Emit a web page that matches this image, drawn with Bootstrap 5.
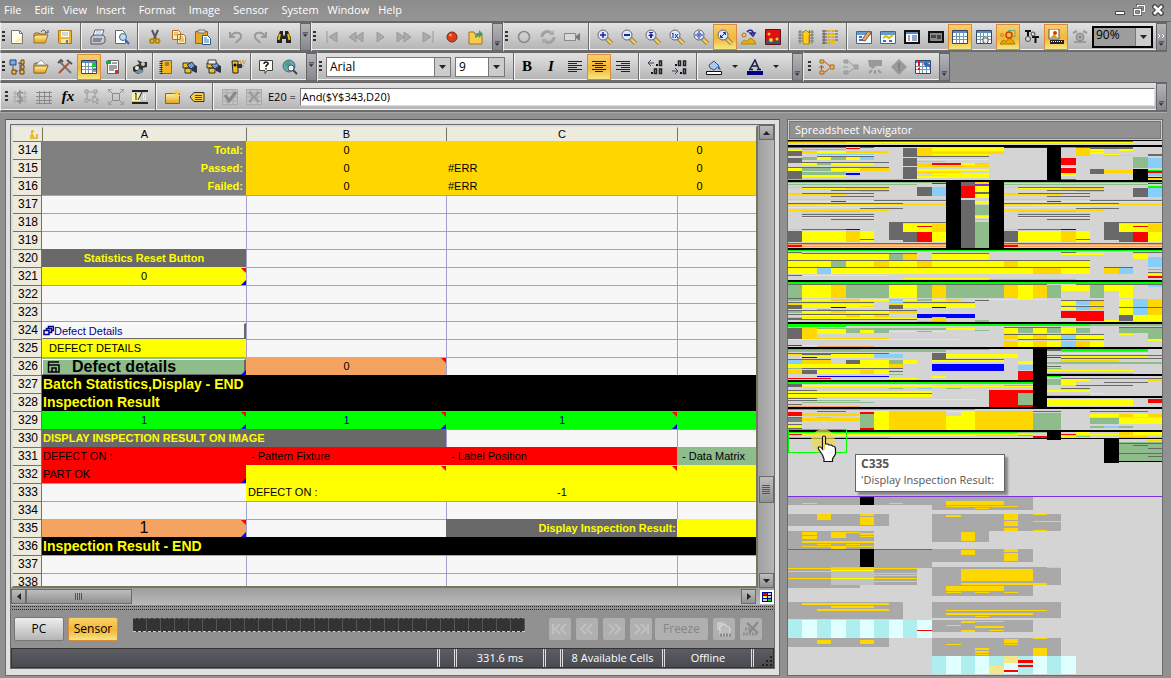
<!DOCTYPE html>
<html lang="en">
<head>
<meta charset="utf-8">
<meta name="viewport" content="width=device-width, initial-scale=1">
<title>Spreadsheet</title>
<link href="https://cdn.jsdelivr.net/npm/bootstrap@5.3.0/dist/css/bootstrap.min.css" rel="stylesheet">
<style>
body{font-family:"Open Sans",sans-serif;font-size:11px;line-height:14px;background:#919191;color:#000;height:100vh;overflow:hidden;padding-right:4px}
button,input,select{font-family:inherit;font-size:inherit;line-height:inherit}
svg{display:block;flex:none}
.menubar{height:22px;background:linear-gradient(#8b8b8b,#969696);border-bottom:1px solid #666;margin-right:-4px;padding-bottom:1px}
.menubar a{color:#fff;text-decoration:none;padding:0 5px 0 4px}
.winbtn{border:0;background:none;padding:0;width:19px;height:20px;display:grid;place-items:center}
.band{height:30px}
.tools{height:30px;display:flex;align-items:center;background:linear-gradient(#e2e2e2,#b4b4b4);border-top:1px solid #666;border-bottom:2px solid #6c6c6c;border-left:1px solid #eee;box-shadow:inset 0 -1px #f2f2f2}
.grip{width:3px;height:11px;margin:0 1px 0 1px;background:repeating-linear-gradient(#333 0 2px,transparent 2px 4px);flex:none}
.tbtn{width:24px;height:26px;padding:0;border:1px solid transparent;background:none;display:grid;place-items:center;flex:none}
.tbtn.on{border-color:#d98a3a;background:linear-gradient(#f8cf6c,#f1b637 55%,#f7e682)}
.rule{width:2px;height:27px;background:#6b6b6b;border-right:1px solid #f4f4f4;flex:none}
.mx-a{margin-left:3px;margin-right:4px}
.more{width:11px;height:28px;border:1px solid #666;background:linear-gradient(#b4b4b8,#85868e);padding:0 0 3px;display:flex;flex-direction:column;justify-content:end;align-items:center;flex:none}
.more.mid{justify-content:center}
.pick{appearance:none;height:20px;border:1px solid #777;border-radius:0;padding:0 3px;font-size:12px;color:#000;background:url("data:image/svg+xml,%3Csvg xmlns='http://www.w3.org/2000/svg' width='16' height='18'%3E%3Cpath fill='%23ccc' d='M1 0h15v18H1z'/%3E%3Cpath fill='%23777' d='M0 0h1v18H0z'/%3E%3Cpath fill='%23223' d='M5 7h7l-3.500 4z'/%3E%3C/svg%3E") right center no-repeat #fff}
.zoompick{width:61px;height:22px;border:2px solid #000;background-color:#9d9d9d;padding:0 2px 5px;margin:0}
.cellref{width:34px;padding-left:2px;white-space:nowrap}
.formula{height:18px;border:1px solid #777;border-right-color:#ddd;border-bottom-color:#ddd;padding:0 1px;background:#fff;border-radius:0}
.work{padding:6px 0 2px 5px;gap:7px;min-height:0;border-top:1px solid #aaa}
.pane{border:1px solid #6b6b6b;border-top-color:#555;background:#e0e0e0;padding:4px 4px 6px;min-width:0}
.inner{border:1px solid #6b6b6b;background:#919191;min-height:0}
.sheetrow{min-height:0}
.clip{overflow:hidden;border:2px solid #76765f;border-top-color:#ddd;border-left-color:#ddd;background:#f7f7f7;min-width:0}
.sheet{width:100%;table-layout:fixed;border-collapse:separate;border-spacing:0;font-family:"Liberation Sans",sans-serif;font-size:11px;line-height:16px}
.sheet th,.sheet td{padding:0 1px 1px;height:18px;border-top:1px solid #a0a0c8;border-left:1px solid #a0a0c8;white-space:nowrap;overflow:visible;position:relative;text-align:center}
.sheet thead th{height:14px;line-height:13px;padding:0;background:#edeade;border-color:#edeade #edeade #edeade #76765f;font-weight:400}
.sheet thead th:first-child{border-left-color:#edeade}
.sheet tbody th{background:#edeade;border-color:#76765f;border-left:0;border-right:1px solid #76765f;font-weight:400;text-align:right;font-size:12px;padding-right:3px}
.sheet td:nth-child(2){border-left:0;padding-left:1px}
.sheet td.l{text-align:left}.sheet td.r{text-align:right;padding-right:3px}.sheet td.far{padding-right:36px}
.sheet .sun{background:#ffd700;border-color:#ffd700}
.sheet .ash{background:#808080;border-color:#808080}
.sheet .dim{background:#696969;border-color:#696969}
.sheet .yel{background:#ff0;border-color:#ff0}
.sheet .sandy{background:#f4a460;border-color:#f4a460}
.sheet .blk{background:#000;border-color:#000}
.sheet .lime{background:#0f0;border-color:#0f0;color:#00008b}
.sheet .red{background:#f00;border-color:#f00}
.sheet .sage{background:#8fbc8b;border-color:#8fbc8b}
.sheet .b{font-weight:700;color:#ff0}
.sheet .big{font-weight:700;color:#ff0;font-size:14px;text-align:left}
.hi::before,.lo::after{content:"";position:absolute;right:0;width:5px;height:5px}
.hi::before{top:0;background:#f00;clip-path:polygon(0 0,100% 0,100% 100%)}
.lo::after{bottom:0;background:#00f;clip-path:polygon(100% 0,100% 100%,0 100%)}
.cellbtn{display:flex;align-items:center;width:100%;height:16px;border:1px solid #fff;border-right:2px solid #696969;border-bottom:1px solid #696969;background:none;padding:0;line-height:14px;text-align:left}
.sbar{background:linear-gradient(90deg,#a0a0a0,#b5b5b5)}
.sbtn{width:15px;height:15px;padding:0;border:1px solid #6a6a6a;background:linear-gradient(#bdbdbd,#929292);display:grid;place-items:center;flex:none}
.vs{width:16px}.hs{height:17px;background:linear-gradient(#9d9d9d,#b9b9b9)}
.split{height:5px;margin:0 1px;background:repeating-linear-gradient(90deg,#222 0 1px,transparent 1px 2px) 0 1px/100% 1px no-repeat,repeating-linear-gradient(90deg,#222 0 1px,transparent 1px 2px) 0 4px/100% 1px no-repeat}
.mode{width:50px;height:24px;border:1px solid #777;border-radius:2px;background:linear-gradient(#eee,#b5b5b5);padding:0;font-size:12px}
.mode.on{border-color:#d98a3a;background:linear-gradient(#f8d366,#f1b637 55%,#f7e682)}
.film{height:14px;max-width:392px;background:repeating-linear-gradient(90deg,#333 0 13px,#555 13px 14px);border-top:1px dashed #666;border-bottom:1px dashed #ccc}
.ghost{width:22px;height:22px;border:0;border-radius:2px;background:#b0b0b0;color:#858585;padding:0;display:grid;place-items:center;flex:none}
.status{height:20px;background:linear-gradient(#5c5d62,#4a4b50);border:1px solid #333;color:#fff}
.status div{border-left:3px double #ddd;height:18px;line-height:18px;text-align:center;white-space:nowrap}
.navpane{width:376px;flex:none;border:1px solid #6b6b6b;background:#d4d4d4;min-height:0}
.navtitle{height:20px;flex:none;border:1px solid #ccc;outline:1px solid #777;outline-offset:-2px;background:#919191;color:#fff;padding:1px 6px}
.navtitle h2{font-size:11px;line-height:15px;margin:0;font-weight:400}
.tip{position:absolute;left:67px;top:314px;width:150px;background:#fff;border:1px solid #666;box-shadow:3px 3px 2px #888;color:#555;padding:1px 0 3px 5px;line-height:16px;white-space:nowrap}
.tip b{font-size:12px}
.hand{position:absolute;left:23px;top:287px}
</style>
</head>
<body class="d-flex flex-column">
<svg width="0" height="0" class="position-absolute" aria-hidden="true">
<defs>
<linearGradient id="gold" x2="0" y2="1"><stop stop-color="#fff3a0"/><stop offset="1" stop-color="#e0a020"/></linearGradient>
<symbol id="lens" viewBox="0 0 16 16"><path d="M9.500 9.500l5 5" stroke="#765" stroke-width="4"/><path d="M10 10l4.500 4.500" stroke="#fc4" stroke-width="2.500"/><circle cx="6" cy="6" r="5" fill="#dceaff" stroke="#667"/></symbol>
<symbol id="folder" viewBox="0 0 16 16"><path d="M1 5l1-1h4l1 1h5v3H1z" fill="#e8b030" stroke="#865"/><path d="M1 14V7l3-1h11l-3 8z" fill="url(#gold)" stroke="#a07020"/></symbol>
<symbol id="sheetgrid" viewBox="0 0 16 16"><path d="M.5 1.500h15v13H.5z" fill="#fff" stroke="#346"/><path d="M1 2h14v2H1z" fill="#58b"/><path d="M1 7.500h14M1 10.500h14M4.500 3v11M7.500 3v11M11.500 3v11" stroke="#79a"/></symbol>
<symbol id="win" viewBox="0 0 16 16"><path d="M.5 2.500h15v12H.5z" fill="#f4f8fc" stroke="#468"/><path d="M1 3h14v3H1z" fill="#69c"/></symbol>
<symbol id="down" viewBox="0 0 8 6"><path d="M1 .5h6" stroke="#333"/><path d="M1 2h6L4 5.500z" fill="#333"/><path d="M4 5.500L7 2" stroke="#fff" stroke-width=".5"/></symbol>
<symbol id="hills" viewBox="0 0 16 16"><path d="M0 14c2-5 4-6 6-2 2-6 6-6 10 2z" fill="#e8a800" stroke="#864"/><circle cx="3" cy="5" r="2" fill="#fb2" stroke="#a63"/></symbol>
<symbol id="can" viewBox="0 0 16 16"><path d="M1 4h8v5H1zM3 9h6v5H3z" fill="#f1c021" stroke="#333"/><path d="M8 4l7 3v7l-5-2z" fill="#334"/><path d="M5 6l5-3 3 4-4 3z" fill="#79c" stroke="#235"/></symbol>
</defs></svg>

<nav class="menubar d-flex align-items-center flex-shrink-0" aria-label="Menu">
<a href="#">File</a><a href="#" class="ms-1 ps-1">Edit</a><a href="#">View</a><a href="#">Insert</a><a href="#" class="ms-1">Format</a><a href="#" class="ms-1">Image</a><a href="#" class="ms-1">Sensor</a><a href="#" class="ms-1">System</a><a href="#">Window</a><a href="#">Help</a>
<div class="ms-auto d-flex pe-1">
<button class="winbtn" aria-label="Minimize"><svg width="12" height="12"><path d="M1.500 7.500h9v3h-9z" fill="#fff" stroke="#444"/></svg></button>
<button class="winbtn" aria-label="Restore"><svg width="12" height="12"><path d="M4.500 3V1.500h7v6H9M1.500 5.500h6v5h-6z" fill="none" stroke="#444" stroke-width="3"/><path d="M4.500 3V1.500h7v6H9M1.500 5.500h6v5h-6z" fill="none" stroke="#fff" stroke-width="1.500"/></svg></button>
<button class="winbtn" aria-label="Close"><svg width="12" height="12"><path d="M1 1l10 10M11 1L1 11" stroke="#444" stroke-width="5"/><path d="M2 2l8 8M10 2l-8 8" stroke="#fff" stroke-width="2.500"/></svg></button>
</div>
</nav>

<div class="band d-flex flex-shrink-0">
<div class="tools">
<span class="grip me-0"></span>
<button class="tbtn" aria-label="New"><svg width="16" height="16"><path d="M2.500 1.500h8l3 3v10h-11z" fill="#fffff0" stroke="#777"/><path d="M4 13h9V8z" fill="#fdeea0"/><path d="M10.500 1.500v3h3" fill="none" stroke="#777"/></svg></button>
<button class="tbtn" aria-label="Open"><svg width="16" height="16"><use href="#folder"/><path d="M8 3c2-3 4-2 5 0l-1 1 3 0v-3" fill="none" stroke="#357"/></svg></button>
<button class="tbtn" aria-label="Save"><svg width="16" height="16"><path d="M1.500 1.500h13v13h-12l-1-1z" fill="#eeb62c" stroke="#a87820"/><path d="M4 2h8v6H4z" fill="#fff"/><path d="M5 4h6M5 6h6" stroke="#aaa"/><path d="M4 10h8v4H4z" fill="#f4e2a0"/><path d="M9 11h2v3H9z" fill="#777"/></svg></button>
<span class="rule mx-a"></span>
<button class="tbtn" aria-label="Print"><svg width="16" height="16"><path d="M5 1h9l-2 6H3z" fill="#fff" stroke="#568"/><path d="M1 8l3-2h9l2 2v5l-3 2H1z" fill="#c5c8cf" stroke="#556"/><path d="M3 10h9M3 12h8" stroke="#445"/><path d="M6 3h5M6 5h5" stroke="#9bd"/></svg></button>
<button class="tbtn" aria-label="Print preview"><svg width="16" height="16"><path d="M1.500 1.500h7l3 3v10h-10z" fill="#fff" stroke="#666"/><circle cx="9" cy="8" r="3.500" fill="#bde" stroke="#468"/><path d="M11.500 11l3.500 4" stroke="#36a" stroke-width="2"/></svg></button>
<span class="rule mx-a"></span>
<button class="tbtn" aria-label="Cut"><svg width="16" height="16"><path d="M5 1l4 9M11 1L7 10" stroke="#556" stroke-width="2"/><circle cx="5" cy="12" r="2" fill="none" stroke="#b80" stroke-width="2"/><circle cx="10.500" cy="12" r="2" fill="none" stroke="#b80" stroke-width="2"/></svg></button>
<button class="tbtn" aria-label="Copy"><svg width="16" height="16"><path d="M1.500 1.500h6l2 2v7h-8zM6.500 5.500h6l2 2v7h-8z" fill="#fff0b8" stroke="#b56a20"/><path d="M3 4h4M3 6h3M8 8h4M8 10h5M8 12h5" stroke="#c93"/></svg></button>
<button class="tbtn" aria-label="Paste"><svg width="16" height="16"><path d="M.5 2.500h12v12H.5z" fill="#e6a924" stroke="#955"/><path d="M3 1h7v3H3z" fill="#ddd" stroke="#777"/><path d="M7.500 6.500h5l3 3v6h-8z" fill="#fff" stroke="#357"/><path d="M9 9h3M9 11h5M9 13h5" stroke="#37b"/></svg></button>
<span class="rule mx-a"></span>
<button class="tbtn" aria-label="Undo"><svg width="16" height="16"><path d="M2 3v5h5M3 7c3-5 11-4 10 1-.5 3-4 3-5 6" fill="none" stroke="#999" stroke-width="2"/></svg></button>
<button class="tbtn" aria-label="Redo"><svg width="16" height="16"><path d="M14 3v5H9M13 7C10 2 2 3 3 8c.5 3 4 3 5 6" fill="none" stroke="#999" stroke-width="2"/></svg></button>
<button class="tbtn" aria-label="Find"><svg width="16" height="16"><path d="M4 2h3v4l1 1 1-1V2h3l3 7v5h-5v-4H6v4H1V9z" fill="#222"/><path d="M4 5L2.500 11M12 5l1.500 6" stroke="#eb0" stroke-width="2"/></svg></button>
<button class="more mid ms-1" aria-label="Toolbar options"><svg width="7" height="6"><use href="#down"/></svg></button>
</div>
<div class="tools">
<span class="grip me-1"></span>
<button class="tbtn" aria-label="First"><svg width="16" height="16"><path d="M3 2v12M13 3v10L5 8z" fill="#aaa" stroke="#999"/></svg></button>
<button class="tbtn" aria-label="Back"><svg width="16" height="16"><path d="M8 3v10L1 8zM15 3v10L8 8z" fill="#aaa" stroke="#999"/></svg></button>
<button class="tbtn" aria-label="Play"><svg width="16" height="16"><path d="M5 3v10l7-5z" fill="#aaa" stroke="#999"/></svg></button>
<button class="tbtn" aria-label="Forward"><svg width="16" height="16"><path d="M1 3v10l7-5zM8 3v10l7-5z" fill="#aaa" stroke="#999"/></svg></button>
<button class="tbtn" aria-label="Last"><svg width="16" height="16"><path d="M3 3v10l8-5zM13 2v12" fill="#aaa" stroke="#999"/></svg></button>
<button class="tbtn" aria-label="Record"><svg width="16" height="16"><circle cx="8" cy="8" r="5" fill="#d8401a" stroke="#822"/><circle cx="6.500" cy="6" r="1.500" fill="#ff9060"/></svg></button>
<button class="tbtn" aria-label="Open recording"><svg width="16" height="16"><path d="M1 3h5l1 2h7v10H1z" fill="#f5cd4c" stroke="#b06a20"/><path d="M7 9c0-4 2-5 4-5V1l4 4-4 4V7" fill="#4a9a70"/></svg></button>
<button class="more ms-1" aria-label="Toolbar options"><svg width="7" height="6"><use href="#down"/></svg></button>
</div>
<div class="tools flex-grow-1">
<span class="grip me-1"></span>
<button class="tbtn" aria-label="Trigger"><svg width="16" height="16"><circle cx="8" cy="8" r="5.500" fill="none" stroke="#888" stroke-width="1.500"/></svg></button>
<button class="tbtn" aria-label="Repeat"><svg width="16" height="16"><path d="M2 8c0-5 6-7 9-4M14 8c0 5-6 7-9 4" fill="none" stroke="#a2a2a2" stroke-width="3"/><path d="M9 6h5V1M7 10H2v5" fill="#aaa"/></svg></button>
<button class="tbtn" aria-label="Live video"><svg width="16" height="16"><path d="M.5 4.500h11v7H.5z" fill="#d8d8d8" stroke="#888"/><path d="M12 7l4-3v8l-4-3z" fill="#777"/></svg></button>
<span class="rule ms-1 me-1"></span>
<button class="tbtn" style="margin-left:-1px" aria-label="Zoom in"><svg width="16" height="16"><use href="#lens"/><path d="M3 6h6M6 3v6" stroke="#229" stroke-width="1.500"/></svg></button>
<button class="tbtn" aria-label="Zoom out"><svg width="16" height="16"><use href="#lens"/><path d="M3 6h6" stroke="#229" stroke-width="2"/></svg></button>
<button class="tbtn" aria-label="Zoom to point"><svg width="16" height="16"><use href="#lens"/><path d="M4 3.500h4" stroke="#229"/><path d="M6 4l3 3H7v2H5V7H3z" fill="#229"/></svg></button>
<button class="tbtn" aria-label="Actual size"><svg width="16" height="16"><use href="#lens"/><path d="M3 5l1-1v5M6 5l3 4M9 5L6 9" fill="none" stroke="#229"/></svg></button>
<button class="tbtn" aria-label="Fit"><svg width="16" height="16"><use href="#lens"/><path d="M2 6h8M6 2v8" stroke="#229" stroke-dasharray="3 2"/><path d="M4 4l4 4M8 4L4 8" stroke="#57c"/></svg></button>
<button class="tbtn on" aria-label="Fill"><svg width="16" height="16"><use href="#lens"/><path d="M4 8l4-4M6 3.500h2.500V6M3.500 6v2.500H6" fill="none" stroke="#229"/></svg></button>
<button class="tbtn" aria-label="Rotate image"><svg width="16" height="16"><path d="M0 15c2-4 4-5 6-2 2-5 6-5 9 2z" fill="#e8b000" stroke="#a80"/><circle cx="3" cy="6" r="2" fill="#fc4" stroke="#a63"/><path d="M6 3c2-3 6-2 6 1M9 4h5l-2 3z" fill="none" stroke="#229" stroke-width="1.500"/></svg></button>
<button class="tbtn" aria-label="Image overlay"><svg width="16" height="16"><path d="M.5.5h15v15H.5z" fill="#d11" stroke="#611"/><path d="M1 15V12l4-2 4 3 3-3 3 2v3z" fill="#357"/><circle cx="4" cy="5" r="1.500" fill="#fb3"/><circle cx="6" cy="11" r="2" fill="#fc2"/><circle cx="12" cy="10" r="1.500" fill="#fc2"/></svg></button>
<span class="rule mx-a"></span>
<button class="tbtn" aria-label="Promote"><svg width="16" height="16"><path d="M0 3h16M0 6h16M0 9h16M0 12h16M2 1v14M14 1v14M11.500 1v14" stroke="#777"/><path d="M8 1l5 5h-2v9H5V6H3z" fill="#fc2" stroke="#b80"/></svg></button>
<button class="tbtn" aria-label="Columns"><svg width="16" height="16"><path d="M0 2h5M0 5h5M0 8h5M0 11h5M0 14h5M13 2h3M13 5h3M13 8h3M13 11h3M2 1v14" stroke="#555"/><path d="M7 1v14M11 1v12" stroke="#e8b000" stroke-width="3" stroke-dasharray="2 1"/><path d="M8 12h6l-3 4z" fill="#fb0"/></svg></button>
<span class="rule ms-1 me-1"></span>
<button class="tbtn" aria-label="Edit form"><svg width="16" height="16"><use href="#win"/><path d="M3 8h3M3 11h4" stroke="#37b" stroke-width="2"/><path d="M6 11l6-9 3 2-6 8z" fill="#e8a860" stroke="#854"/></svg></button>
<button class="tbtn" aria-label="Chart form"><svg width="16" height="16"><use href="#win"/><path d="M3 9l3-2 3 2 4-3" fill="none" stroke="#db0" stroke-width="2"/><path d="M3 12h3M9 12h3" stroke="#37b" stroke-width="2"/></svg></button>
<button class="tbtn" aria-label="Dialog"><svg width="16" height="16"><path d="M0 1h16v14H0z" fill="#111"/><path d="M2 3h12v10H2z" fill="#fff"/><path d="M2 4h12" stroke="#58b" stroke-width="2"/><path d="M4 7h2M8 7h5M4 9h2M8 9h5M4 11h2M8 11h5" stroke="#258"/></svg></button>
<button class="tbtn" aria-label="Display"><svg width="16" height="16"><path d="M0 2h16v12H0z" fill="#111"/><path d="M2 4h12v8H2z" fill="#888"/><path d="M3 6h5v3H3zM9 6h4v4H9z" fill="#444"/></svg></button>
<button class="tbtn on" aria-label="Grid"><svg width="16" height="16"><use href="#sheetgrid"/></svg></button>
<button class="tbtn" aria-label="Grid options"><svg width="16" height="16"><use href="#sheetgrid"/><path d="M7 9h5v4l-2 2-3-2z" fill="#eee" stroke="#555"/></svg></button>
<button class="tbtn on" aria-label="Graphics"><svg width="16" height="16"><path d="M0 15c2-4 4-5 6-2 2-5 6-5 9 2z" fill="#e8a800" stroke="#a70"/><circle cx="2" cy="6" r="1.500" fill="#fb2" stroke="#c83"/><path d="M8 1.500h7v6h-2" fill="none" stroke="#6a8"/><circle cx="9" cy="6" r="3" fill="none" stroke="#c40" stroke-width="1.500"/></svg></button>
<button class="tbtn" aria-label="Text overlay"><svg width="16" height="16"><path d="M1 2h6M4 2v5M8 8h7M11.500 8v6" stroke="#111" stroke-width="2"/><circle cx="4" cy="10" r="2.500" fill="#ddd" stroke="#444"/><circle cx="9" cy="5" r="2" fill="#ddd" stroke="#444"/></svg></button>
<button class="tbtn on" aria-label="Filmstrip"><svg width="16" height="16"><path d="M1 0h10v10H1z" fill="#fff" stroke="#555"/><circle cx="7" cy="4" r="2" fill="#c40"/><path d="M2 9l4-4 4 4z" fill="#e90"/><path d="M2 11h14v4H2z" fill="#222"/><path d="M3 12.500h12" stroke="#fff" stroke-dasharray="1 1"/></svg></button>
<button class="tbtn" aria-label="Alarm"><svg width="16" height="16"><path d="M1 4l4-2M15 4l-4-2M2 13h12" stroke="#999" stroke-width="2"/><circle cx="8" cy="8" r="4" fill="#aaa" stroke="#888"/><circle cx="8" cy="8" r="1" fill="#777"/></svg></button>
<select class="pick zoompick" aria-label="Zoom"><option>90%</option></select>
<button class="more ms-auto justify-content-between pt-2" aria-label="Toolbar options"><svg width="7" height="7"><path d="M0 2l2 2-2 2M4 2l2 2-2 2" fill="none" stroke="#fff"/></svg><svg width="7" height="6"><use href="#down"/></svg></button>
</div>
</div>

<div class="band d-flex flex-shrink-0">
<div class="tools">
<span class="grip me-0"></span>
<button class="tbtn" aria-label="Network"><svg width="16" height="16"><path d="M4 7v5h5M9 4h4M11 4v9" fill="none" stroke="#555"/><path d="M1 1h6v5H1z" fill="#7ae" stroke="#346"/><path d="M12 1h3v4h-3zM12 6h3v4h-3zM3 11h4v4H3zM11 11h4v4h-4z" fill="#fb2" stroke="#543"/></svg></button>
<button class="tbtn" aria-label="Jobs"><svg width="16" height="16"><use href="#folder"/><path d="M3 6l5-5 5 5z" fill="#fff" stroke="#999"/><path d="M1 14V7h14l-3 7z" fill="url(#gold)" stroke="#a07020"/></svg></button>
<button class="tbtn" aria-label="Tools"><svg width="16" height="16"><path d="M3 3l11 11" stroke="#777" stroke-width="2"/><path d="M12 4L2 14" stroke="#a54" stroke-width="2"/><path d="M1 4l3-3 2 2M10 1l5 4" fill="none" stroke="#555" stroke-width="2"/></svg></button>
<button class="tbtn on" aria-label="Spreadsheet"><svg width="16" height="16"><use href="#sheetgrid"/><path d="M11 4h4v4h-4z" fill="#1c3"/><path d="M12 10h3M12 12h3" stroke="#238" stroke-width="1"/></svg></button>
<button class="tbtn" aria-label="Report"><svg width="16" height="16"><path d="M2.500 1.500h11v13h-11z" fill="#fff" stroke="#666"/><path d="M1 2h5v3H1z" fill="#1a4"/><path d="M7 4h5M4 7h8M4 9h8M4 11h5" stroke="#444"/><path d="M10 11h3v3h-3z" fill="#d22"/></svg></button>
<span class="rule me-1"></span>
<button class="tbtn" style="margin-left:-3px" aria-label="Users"><svg width="16" height="16"><path d="M5 1l5 2 5 0v5l-5 1zM1 8l6-3 4 3v5l-5 2-5-3z" fill="#333"/><circle cx="11" cy="5" r="2" fill="#ccb"/><circle cx="5" cy="9" r="2" fill="#eec"/><path d="M3 13l5-3 4 2-4 3z" fill="#69a"/></svg></button>
<span class="rule me-0"></span>
<button class="tbtn" aria-label="Notebook"><svg width="16" height="16"><path d="M3.500 1.500h10v13h-10z" fill="#f3b51f" stroke="#765"/><path d="M3 2v13" stroke="#333" stroke-width="3" stroke-dasharray="1 1"/><path d="M7 4h4M7 6h4" stroke="#543"/></svg></button>
<button class="tbtn" aria-label="Backup"><svg width="16" height="16"><use href="#can"/></svg></button>
<button class="tbtn" aria-label="Restore"><svg width="16" height="16"><use href="#can"/><path d="M2 1h8v4H2z" fill="#eee" stroke="#444"/></svg></button>
<button class="tbtn" aria-label="Clone"><svg width="16" height="16"><path d="M2 2h6v12H3z" fill="#f1b81c" stroke="#222"/><path d="M7 5h5v4H7z" fill="#333"/><path d="M9 2h7M10 4h6M12 7h3" stroke="#c94" stroke-width="1.500" stroke-dasharray="2 1"/><circle cx="5" cy="6" r="1.500"/></svg></button>
<span class="rule me-1"></span>
<button class="tbtn" style="margin-left:-2px" aria-label="Help"><svg width="16" height="16"><path d="M1.500 1.500h13v10H9l-2 3v-3H1.500z" fill="#fffff4" stroke="#444"/><path d="M6 5c0-3 5-2 4 0L8 7v1M8 9v1.500" fill="none" stroke="#111" stroke-width="1.500"/></svg></button>
<button class="tbtn me-1" aria-label="Web"><svg width="16" height="16"><circle cx="7" cy="7" r="6" fill="#6ab" stroke="#468"/><path d="M3 3l4-1 2 3-3 3-3-1zM8 10l4-3 0 3-3 3z" fill="#4a6"/><circle cx="9" cy="9" r="3" fill="#eef" stroke="#456"/><path d="M11 11l4 4" stroke="#444" stroke-width="2"/></svg></button>
<button class="more mid ms-auto" aria-label="Toolbar options"><svg width="7" height="6"><use href="#down"/></svg></button>
</div>
<div class="tools">
<span class="grip me-1"></span>
<select class="pick" style="width:125px" aria-label="Font"><option>Arial</option></select>
<select class="pick ms-1" style="width:50px" aria-label="Font size"><option>9</option></select>
<span class="rule ms-2 me-0"></span>
<button class="tbtn" aria-label="Bold"><b style="font:bold 15px 'Liberation Serif',serif">B</b></button>
<button class="tbtn" aria-label="Italic"><b style="font:italic bold 15px 'Liberation Serif',serif">I</b></button>
<button class="tbtn" aria-label="Align left"><svg width="16" height="16"><path d="M1 2.500h14M1 4.500h9M1 6.500h14M1 8.500h9M1 10.500h14M1 12.500h9" stroke="#222"/></svg></button>
<button class="tbtn on" aria-label="Center"><svg width="16" height="16"><path d="M1 2.500h14M4 4.500h8M1 6.500h14M4 8.500h8M1 10.500h14M4 12.500h8" stroke="#222"/></svg></button>
<button class="tbtn" aria-label="Align right"><svg width="16" height="16"><path d="M1 2.500h14M6 4.500h9M1 6.500h14M6 8.500h9M1 10.500h14M6 12.500h9" stroke="#222"/></svg></button>
<span class="rule mx-a"></span>
<button class="tbtn" aria-label="Increase decimal"><svg width="16" height="16"><path d="M0 4h6M3 1L0 4l3 3" fill="none" stroke="#346"/><path d="M8 6h2M3 14h2" stroke="#111" stroke-width="2"/><path d="M11.500 2v4.500h2V2zM6.500 10v4.500h2V10zM11.500 10v4.500h2V10z" fill="none" stroke="#222" stroke-width="1.500"/></svg></button>
<button class="tbtn" aria-label="Decrease decimal"><svg width="16" height="16"><path d="M0 12h6M3 9l3 3-3 3" fill="none" stroke="#346"/><path d="M3 6h2M8 14h2" stroke="#111" stroke-width="2"/><path d="M6.500 2v4.500h2V2zM11.500 2v4.500h2V2zM11.500 10v4.500h2V10z" fill="none" stroke="#222" stroke-width="1.500"/></svg></button>
<span class="rule ms-1 me-1"></span>
<button class="tbtn" aria-label="Fill color"><svg width="16" height="16"><path d="M3 6l5-4 5 5-5 4-4-2z" fill="#a8c8ee" stroke="#456"/><path d="M12 5l3 6-3-1z" fill="#26b"/><path d="M.5 12.500h15v3H.5z" fill="#fff" stroke="#111"/></svg></button>
<svg width="17" height="6"><path d="M6 1h6L9 4z" fill="#222"/></svg>
<button class="tbtn" aria-label="Text color"><svg width="16" height="16"><path d="M3 10l5-9 4 9M5 7h5M2 10.500h4M10 10.500h4" fill="none" stroke="#124" stroke-width="1.500"/><path d="M0 12h16v4H0z" fill="#00008b"/></svg></button>
<svg width="17" height="6"><path d="M6 1h6L9 4z" fill="#222"/></svg>
<button class="more ms-2" aria-label="Toolbar options"><svg width="7" height="6"><use href="#down"/></svg></button>
</div>
<div class="tools">
<span class="grip me-1 ms-1"></span>
<button class="tbtn" aria-label="Add link"><svg width="16" height="16"><path d="M6 3l5 4M6 13l4-3M0 8h5M2.500 6v5" stroke="#d40"/><path d="M1 1h4v3H1zM1 12h4v3H1zM11 6h4v4h-4z" fill="#fb2" stroke="#963"/></svg></button>
<button class="tbtn" aria-label="Remove link"><svg width="16" height="16"><path d="M6 3l5 4M6 13l4-3M0 8h5" stroke="#999"/><path d="M1 1h4v3H1zM1 12h4v3H1zM11 6h4v4h-4z" fill="#aaa" stroke="#999"/></svg></button>
<button class="tbtn" aria-label="Trace"><svg width="16" height="16"><path d="M1 1h14v6H9l-3 3-4-3z" fill="#999"/><path d="M2 14l3-3M8 11v4M14 14l-3-3" stroke="#999" stroke-width="2"/></svg></button>
<button class="tbtn" aria-label="Warning"><svg width="16" height="16"><path d="M8 0l8 8-8 8-8-8z" fill="#999"/><path d="M8 4v5M8 10v2" stroke="#777" stroke-width="1.500"/></svg></button>
<button class="tbtn" aria-label="Cell errors"><svg width="16" height="16"><use href="#sheetgrid"/><path d="M4 1v6M4 9v2" stroke="#e11" stroke-width="2"/><path d="M8 5l4-4v3c3 0 4 3 3 6-1-3-2-3-3-3v2z" fill="#36b"/></svg></button>
<button class="more ms-1" aria-label="Toolbar options"><svg width="7" height="6"><use href="#down"/></svg></button>
</div>
</div>

<div class="band d-flex flex-shrink-0">
<div class="tools flex-grow-1">
<span class="grip ms-1 me-0"></span>
<button class="tbtn" aria-label="Absolute"><svg width="16" height="16"><path d="M1 4h4M11 4h4M1 8h14M1 12h14M3 2v12M13 2v12" stroke="#aaa"/><path d="M11 4c-5-2-8 2-3 4s2 6-3 4M8 1v14" fill="none" stroke="#909090" stroke-width="1.500"/></svg></button>
<button class="tbtn" aria-label="Relative"><svg width="16" height="16"><path d="M0 3.500h16M0 7.500h16M0 11.500h16M0 14.500h16M3.500 2v13M8.500 2v13M13.500 2v13" stroke="#888"/></svg></button>
<button class="tbtn" aria-label="Insert function"><b style="font:italic bold 15px 'Liberation Serif',serif">fx</b></button>
<button class="tbtn" aria-label="Region"><svg width="16" height="16"><path d="M3 3h8v6M3 3v8h5" fill="none" stroke="#999"/><path d="M1 1h3v3H1zM10 1h3v3h-3zM1 10h3v3H1zM9 7v7l2-2 2 3 1-1-2-3h3z" fill="#ccc" stroke="#999"/></svg></button>
<button class="tbtn" aria-label="Maximize region"><svg width="16" height="16"><path d="M4.500 4.500h7v7h-7zM4 4L1 1M12 4l3-3M4 12l-3 3M12 12l3 3M0 4V0h4M12 0h4v4M0 12v4h4M16 12v4h-4" fill="none" stroke="#888"/></svg></button>
<button class="tbtn" aria-label="Discrete I/O"><svg width="16" height="16"><path d="M0 2h16M0 14h16" stroke="#222" stroke-width="2"/><path d="M0 4h8v8H0z" fill="#fff2a0"/><path d="M3 5l1-1v7M6 11l4-8" fill="none" stroke="#222"/><path d="M11.500 5.500h2v5h-2z" fill="none" stroke="#eee"/></svg></button>
<span class="rule mx-a"></span>
<button class="tbtn" aria-label="New snippet"><svg width="16" height="16"><path d="M.5 4.500h14v10H.5z" fill="url(#gold)" stroke="#765"/><path d="M12 0v8M8 4h8M9 1l6 6M15 1L9 7" stroke="#fc3"/></svg></button>
<button class="tbtn" aria-label="Tag"><svg width="16" height="16"><path d="M1 8l4-4.500h10v9H5z" fill="#f7cf3c" stroke="#333"/><path d="M6 6.500h7M6 8.500h7M6 10.500h7" stroke="#543"/></svg></button>
<span class="rule mx-a me-1"></span>
<button class="tbtn" aria-label="Accept"><svg width="16" height="16"><path d="M.5.5h15v15H.5zM1 4h14M1 8h14M1 12h14M5 1v14M11 1v14" fill="#c4c4c4" stroke="#aaa"/><path d="M3 6l4 6 7-9" fill="none" stroke="#888" stroke-width="3"/></svg></button>
<button class="tbtn" aria-label="Cancel"><svg width="16" height="16"><path d="M.5.5h15v15H.5zM1 4h14M1 8h14M1 12h14M5 1v14M11 1v14" fill="#c4c4c4" stroke="#aaa"/><path d="M3 3l10 10M13 3L3 13" stroke="#999" stroke-width="2"/></svg></button>
<label class="cellref flex-shrink-0 me-0" for="formula">E20 =</label>
<input id="formula" class="formula flex-grow-1 ms-0" style="margin-right:1px" value="And($Y$343,D20)">
<button class="more" aria-label="Toolbar options"><svg width="7" height="6"><use href="#down"/></svg></button>
</div>
</div>

<main class="work d-flex flex-grow-1">
<section class="pane flex-grow-1 d-flex flex-column">
<div class="inner flex-grow-1 d-flex flex-column">
<div class="sheetrow d-flex flex-grow-1">
<div class="clip flex-grow-1">
<table class="sheet">
<colgroup><col style="width:29px"><col style="width:204px"><col style="width:200px"><col style="width:231px"><col></colgroup>
<thead><tr><th><svg class="ms-auto me-1" width="9" height="9"><path d="M3 5V1h2M1 6h4M1 8h7V4" fill="none" stroke="#e8b000" stroke-width="1.500"/></svg></th><th>A</th><th>B</th><th>C</th><th></th></tr></thead>
<tbody>
<tr><th>314</th><td class="ash r b">Total:</td><td class="sun">0</td><td class="sun"></td><td class="sun far">0</td></tr>
<tr><th>315</th><td class="ash r b">Passed:</td><td class="sun">0</td><td class="sun l">#ERR</td><td class="sun far">0</td></tr>
<tr><th>316</th><td class="ash r b">Failed:</td><td class="sun">0</td><td class="sun l">#ERR</td><td class="sun far">0</td></tr>
<tr><th>317</th><td></td><td></td><td></td><td></td></tr>
<tr><th>318</th><td></td><td></td><td></td><td></td></tr>
<tr><th>319</th><td></td><td></td><td></td><td></td></tr>
<tr><th>320</th><td class="dim b">Statistics Reset Button</td><td></td><td></td><td></td></tr>
<tr><th>321</th><td class="yel hi lo">0</td><td></td><td></td><td></td></tr>
<tr><th>322</th><td></td><td></td><td></td><td></td></tr>
<tr><th>323</th><td></td><td></td><td></td><td></td></tr>
<tr><th>324</th><td class="p-0"><button class="cellbtn" style="color:#00008b"><svg width="11" height="11"><path d="M1 5.500h5v4H1zM3.500 5V3.500h5v4H6M5.500 3V1.500h5v4H9M1 5.500h5" fill="none" stroke="#00008b" stroke-width="1.500"/></svg>Defect Details</button></td><td></td><td></td><td></td></tr>
<tr><th>325</th><td class="yel l">&nbsp; DEFECT DETAILS</td><td></td><td></td><td></td></tr>
<tr><th>326</th><td class="sage p-0 lo"><button class="cellbtn" style="font-size:16px;font-weight:700"><svg class="ms-1 me-2" width="13" height="12"><path d="M1 1h11M1.500 1v10H12V4H2M5 11V7h4v4" fill="none" stroke="#000" stroke-width="1.500"/></svg><span class="ms-1">Defect details</span></button></td><td class="sandy hi">0</td><td></td><td></td></tr>
<tr><th>327</th><td class="blk big">Batch Statistics,Display - END</td><td class="blk"></td><td class="blk"></td><td class="blk"></td></tr>
<tr><th>328</th><td class="blk big">Inspection Result</td><td class="blk"></td><td class="blk"></td><td class="blk"></td></tr>
<tr><th>329</th><td class="lime hi lo">1</td><td class="lime hi lo">1</td><td class="lime hi lo">1</td><td class="lime"></td></tr>
<tr><th>330</th><td class="dim l b" colspan="2">DISPLAY INSPECTION RESULT ON IMAGE</td><td></td><td></td></tr>
<tr><th>331</th><td class="red l">DEFECT ON :</td><td class="red l">&nbsp;- Pattern Fixture</td><td class="red l">&nbsp;- Label Position</td><td class="sage l">&nbsp;- Data Matrix</td></tr>
<tr><th>332</th><td class="red l lo">PART OK</td><td class="yel hi"></td><td class="yel hi"></td><td class="yel"></td></tr>
<tr><th>333</th><td></td><td class="yel l">DEFECT ON :</td><td class="yel">-1</td><td class="yel"></td></tr>
<tr><th>334</th><td></td><td></td><td></td><td></td></tr>
<tr><th>335</th><td class="sandy hi lo" style="font-size:16px">1</td><td></td><td class="dim r b" style="padding-right:1px">Display Inspection Result:</td><td class="yel"></td></tr>
<tr><th>336</th><td class="blk big">Inspection Result - END</td><td class="blk"></td><td class="blk"></td><td class="blk"></td></tr>
<tr><th>337</th><td></td><td></td><td></td><td></td></tr>
<tr><th>338</th><td></td><td></td><td></td><td></td></tr>
</tbody>
</table>
</div>
<div class="sbar vs d-flex flex-column align-items-center flex-shrink-0">
<button class="sbtn" aria-label="Scroll up"><svg width="7" height="4"><path d="M0 4h7L3.500 0z" fill="#223"/></svg></button>
<span style="flex:334"></span>
<span class="sbtn" style="height:27px"><svg width="8" height="9"><path d="M0 .5h8M0 2.500h8M0 4.500h8M0 6.500h8M0 8.500h8" stroke="#555"/></svg></span>
<span style="flex:70"></span>
<button class="sbtn" aria-label="Scroll down"><svg width="7" height="4"><path d="M0 0h7L3.500 4z" fill="#223"/></svg></button>
</div>
</div>
<div class="sbar hs d-flex flex-shrink-0 align-items-center">
<button class="sbtn" aria-label="Scroll left"><svg width="4" height="7"><path d="M4 0v7L0 3.500z" fill="#223"/></svg></button>
<span class="sbtn" style="width:106px"><svg width="8" height="7"><path d="M.5 0v7M2.500 0v7M4.500 0v7M6.500 0v7" stroke="#555"/></svg></span>
<button class="sbtn ms-auto me-1" aria-label="Scroll right"><svg width="4" height="7"><path d="M0 0v7l4-3.500z" fill="#223"/></svg></button>
<button class="border-0 p-0 bg-white" aria-label="Navigator"><svg width="14" height="14"><path d="M2 2h10v10H2z" fill="#008"/><path d="M3 3h4v2H3z" fill="#f00"/><path d="M3 6h4v2H3z" fill="#ff0"/><path d="M8 3h3v2H8zM8 6h3v2H8zM3 9h4v2H3z" fill="#ccc"/><path d="M8 9h3v2H8z" fill="#0d0"/></svg></button>
</div>
<div class="split flex-shrink-0"></div>
<div class="d-flex flex-shrink-0 align-items-center" style="height:38px;padding:0 12px 0 3px">
<button class="mode me-1">PC</button><button class="mode on">Sensor</button>
<div class="film flex-grow-1 mb-2" style="margin-left:15px"></div>
<div class="d-flex ms-auto" style="gap:5px">
<button class="ghost" aria-label="First image"><svg width="16" height="12"><path d="M1 1v10M8 1L3 6l5 5M14 1L9 6l5 5" fill="none" stroke="#c0c0c0" stroke-width="2"/></svg></button>
<button class="ghost" aria-label="Previous image"><svg width="16" height="12"><path d="M7 1L2 6l5 5M13 1L8 6l5 5" fill="none" stroke="#c0c0c0" stroke-width="2"/></svg></button>
<button class="ghost" aria-label="Next image"><svg width="16" height="12"><path d="M3 1l5 5-5 5M9 1l5 5-5 5" fill="none" stroke="#c0c0c0" stroke-width="2"/></svg></button>
<button class="ghost" aria-label="Last image"><svg width="16" height="12"><path d="M2 1l5 5-5 5M8 1l5 5-5 5M15 1v10" fill="none" stroke="#c0c0c0" stroke-width="2"/></svg></button>
</div>
<button class="ghost" style="width:53px;margin:0 5px 0 3px;font-size:12px">Freeze</button>
<button class="ghost" style="margin-right:5px" aria-label="Save images"><svg width="16" height="16"><path d="M1 1h6l3 3v5H1z" fill="#c8c8c8"/><path d="M4 6l4-3 6 4v7H4z" fill="#bbb" stroke="#ddd"/><path d="M4 14h12" stroke="#888" stroke-width="3" stroke-dasharray="2 1"/></svg></button>
<button class="ghost" aria-label="Delete images"><svg width="16" height="16"><path d="M0 13h14M2 8h8" stroke="#909090" stroke-width="3" stroke-dasharray="2 1"/><path d="M4 2l11 10M15 1L6 12" stroke="#888" stroke-width="2"/></svg></button>
</div>
<div class="status d-flex flex-shrink-0">
<span class="flex-grow-1"></span>
<div style="width:17px"></div><div style="width:89px">331.6 ms</div><div style="width:17px"></div><div style="width:102px">8 Available Cells</div><div style="width:89px">Offline</div>
<div style="width:22px" class="d-flex align-items-end justify-content-end"><svg width="12" height="12"><path d="M9 2h2M9 6h2M5 6h2M9 10h2M5 10h2M1 10h2" stroke="#222" stroke-width="2"/></svg></div>
</div>
</div>
</section>
<aside class="navpane d-flex flex-column me-1">
<div class="navtitle"><h2>Spreadsheet Navigator</h2></div>
<div class="position-relative flex-grow-1" style="min-height:0">
<svg id="map" class="w-100 h-100" viewBox="0 0 374 535" preserveAspectRatio="none" shape-rendering="crispEdges" role="img" aria-label="Map of the spreadsheet"></svg>
<svg class="hand" width="28" height="38"><circle cx="12" cy="14" r="12" fill="#eed850" opacity=".7"/><path d="M12.500 27l-4-6c-1-3 2-3 4 0V9.500c0-2 3-2 3 0V16h2.500l1 1h2.500l1 1c2 0 3 1 3 3v5l-3 5v2.500H14V31z" transform="translate(-1 1)" fill="#fff" stroke="#111" stroke-width="1.200"/><path d="M13 11v12" stroke="#eed850" stroke-width="2"/></svg>
<div class="tip" role="tooltip"><b>C335</b><br>'Display Inspection Result:</div>
</div>
</aside>
</main>

<script>
// Each line: top, height, then colour + first column - end column.
// A leading * repeats the line fifteen columns to the right.
const tint={K:'#000',Y:'#ff0',O:'#ffd700',D:'#696969',G:'#8fbc8b',R:'#f00',B:'#00f',S:'#87cefa',L:'#0f0',N:'#f4a460',P:'#7a30e0',A:'#a9a9a9',T:'#afeeee',W:'#e0ffff',H:'#f5e888',E:'#808080',C:'#c2c2c2',_:'#d4d4d4'};
const bands=`0 1 K0-26
1 1 D0-24
2 1 O0-4 Y4-24
5 2 K0-26
7 1 D0-4 D5-6 B15-18 L19-20 D20-24
8 1 R4-5 Y9-15 D20-24
8 9 O9-10 D8-9
8 8 O20-21
9 1 G1-4 Y10-15
10 1 Y0-1 Y10-15
11 5 D0-1
11 2 O1-2 Y2-4 O4-7
12 2 O10-15 Y21-22
14 1 S2-6 Y10-14 Y22-23
15 1 Y4-6 O22-24
16 1 D2-6 D9-14
17 3 G1-2 Y2-3 G3-4 Y4-5 S5-6
17 11 G24-25
18 10 S25-26
18 4 D0-1
18 8 D8-9
19 1 Y9-14
21 1 S9-11
22 1 D0-7
23 2 Y1-2 G2-3 Y3-6 R10-12 Y12-13 O13-14
23 3 O9-10
26 1 O9-14
27 1 D0-7 Y19-20
28 3 Y0-1 G1-3 Y3-5 O5-7
27 12 D8-9
29 2 Y9-14
32 1 G1-4 O9-12
33 2 G1-4 B4-5 Y10-14
35 2 Y1-4 Y11-14
36 2 Y9-14
18 7 R19-20
28 5 R19-20
14 2 D25-26
9 2 Y21-22 Y23-24
29 5 D21-22
30 3 O22-24
34 2 Y19-20
31 8 D0-1
39 1 N0-8 D19-20
7 33 K18-19
29 11 K24-25
30 1 L25-26
31 2 R25-26
33 3 S25-26
37 1 B25-26
38 1 O25-26
40 2 K0-26
42 1 G0-26
43 1 R10-11 R25-26
44 1 G0-9 G15-25
46 2 L25-26
*47 1 O0-1 D1-7
*48 1 Y1-4 O4-7
47 9 D9-10 S10-11
48 9 D24-25 S25-26
*50 1 D3-7
*51 1 S5-7
*53 1 O0-1 D1-6
*54 1 O0-4
*56 1 D3-6
*59 1 O0-11
*60 1 D6-11
*61 1 Y0-3 R3-4 Y4-11
*63 1 D0-8
*64 1 O0-11
*65 1 Y2-8
*67 1 Y0-6
*68 1 D5-8
*70 1 O0-7
*71 1 O1-3 S3-5
*73 1 O1-6
*74 1 D1-6
*76 1 D1-6
*77 1 Y1-6
*79 1 D3-6
*82 18 D7-8
*82 1 D7-11
*84 8 Y8-10 O10-11
*86 1 R9-10
*89 1 O0-1 D1-4 B4-5
*91 11 D0-1 Y1-4 O4-5 Y5-6
*92 10 D8-9 R9-10 Y10-11
*99 1 D5-6
*103 1 D0-11
*104 1 N0-11
*106 1 N1-11
*105 2 R0-1
42 66 K11-12 K14-15
42 66 D12-13
42 2 O13-14
44 2 P13-14
46 12 R12-13
46 6 Y13-14
52 2 D13-14
54 4 Y13-14
58 2 _12-14
61 3 Y13-14
65 10 G13-14
76 2 Y13-14
79 1 S13-14
82 26 G13-14
108 2 K0-26
110 1 L0-26
112 1 D0-1 D19-20 D24-26
113 1 D1-9 D10-14
113 2 Y19-22
114 6 Y0-7 G7-8 O8-9 Y10-14
114 5 Y24-25
117 10 S25-26
120 1 D0-21
121 6 Y0-3 G3-4 Y4-6 O6-7 Y7-9 O9-10 Y10-15 O15-16 Y16-21
127 1 D0-21 D22-24
128 6 Y0-2 S2-3 Y3-17 O17-19 Y19-21 O22-23 S23-24
129 1 G25-26
132 1 D25-26
134 1 Y25-26
135 1 D0-1 Y1-7
136 2 R25-26
138 1 Y8-14
139 1 N14-20
140 2 K0-26
142 2 L0-26
144 1 D0-18 D20-26
145 13 G0-1 Y1-3 O3-4 G4-7 Y7-9 G9-10 O10-11 G11-15 O15-16 Y16-17 O17-18 G18-19 G21-22
145 6 Y19-21 Y22-24
151 7 Y23-24
145 2 S25-26
158 1 D0-1 Y16-17
159 2 G0-1 Y1-3 O3-5 Y5-7 S7-8 Y8-9 G9-10 Y10-11 O11-12
159 1 Y14-18
160 1 D13-14 D19-22
161 4 Y19-20 S20-21 O21-22
162 1 D0-6 S7-8 D8-13
163 2 O0-1 O7-8
164 4 Y1-6 Y8-13
165 4 D0-1 D7-8
166 1 D19-22 O5-6
167 1 B3-4 B10-11
167 3 Y19-20 S20-21 O21-22
169 1 Y0-2 G2-3
170 1 D0-9
171 2 G0-1 Y1-3 O3-4 Y4-7 O7-9
171 7 R19-22
174 1 D0-7
174 4 B9-13
175 2 Y1-4 O4-5 Y5-6 O6-7
177 1 S0-1
178 2 D0-1 Y1-3 Y3-9
177 4 O10-11
178 3 R20-22
179 1 D0-9
180 2 G13-14 Y22-23
181 1 N9-11
159 16 Y23-24 S24-25 O25-26
167 1 D23-26
175 6 D23-24 Y24-26
182 2 K0-26
184 2 L0-21 G21-26
186 1 L0-4
187 1 D15-19 D23-26
188 11 D0-1 O1-2 G25-26
188 2 G2-11 Y11-13
189 5 Y2-4
190 3 G4-5 Y5-6 G6-7
191 1 Y7-11 G9-10
190 1 G13-14
188 5 Y15-16 G16-17 Y17-18 G18-19 Y19-20 G20-21 G23-25
194 1 D15-22 Y23-24
195 4 O15-16 Y16-17 O17-18 Y18-19 S19-20 Y20-22
198 1 O2-7
199 1 Y0-12 D16-22
201 6 O15-16 Y16-17 O17-18 Y18-19 S19-20 O20-21 Y21-22
199 2 Y25-26
205 1 R0-1 Y1-2
206 1 N2-6
207 2 K0-26
209 1 L0-5 G5-14
210 2 G0-11
209 2 D18-19 L19-25
211 1 G19-25
213 1 D0-7 Y19-25
214 1 O0-1 D1-4
214 4 Y11-16
213 7 D10-11
214 4 Y3-6 S6-8
215 1 D18-26
216 1 Y1-3 Y19-25
217 1 B1-2 R18-19
218 1 D19-26
219 1 D0-3 D10-15
220 4 S0-1 O1-3 D4-5 Y5-7 G7-8 Y8-9
220 2 Y10-15 O19-23
221 3 Y16-17
222 2 G18-26
224 4 Y0-7 O7-8
224 7 B10-15
225 5 S16-17
226 1 D18-19
228 1 G0-1 D1-8 G18-19
230 4 O0-1 D1-2 Y2-5 O5-6 Y6-7
230 1 Y18-24
231 10 R16-17
231 1 D7-8
233 1 N18-24
234 1 G7-8
234 2 K17-26
236 1 B2-7 L18-19
236 2 Y10-11
238 1 R0-3 Y7-9 D19-26
239 6 G18-19 Y19-20
239 2 Y20-21 O25-26
242 1 D22-25
245 1 D20-24
248 1 D19-21
250 2 Y18-21
253 1 Y21-22
255 1 N18-21
240 2 K0-18
242 2 L0-17
244 3 D0-1
245 1 Y1-10 G15-17
246 1 Y1-17
248 1 G7-8 S9-10 G11-12
250 1 D0-2
251 6 Y0-10
253 1 D0-10
256 2 K17-26
258 1 D0-2
259 1 Y0-13
260 1 D0-2 G2-5
262 1 G1-6
264 1 D0-1
266 1 N0-5
250 17 R14-17
253 12 G16-17
259 7 Y18-24
259 4 R25-26
209 58 K17-18
236 31 K17-18
267 2 K0-26
269 1 L0-13
271 1 D2-4 D17-19 D21-25
271 19 Y6-7 O7-11 Y11-13 O13-17
272 4 R0-1 _11-12
272 2 R5-6
274 14 G5-6
288 2 R5-6
273 3 O1-5
277 1 S2-3 D0-1
278 3 O1-5
278 4 E0-1
284 1 D0-1
286 1 Y0-1
288 1 D0-1
273 17 G17-19
274 3 Y21-23 O23-24 Y24-25 O25-26
278 6 G21-23 Y23-26
286 2 G21-22 S22-23 G23-24
290 2 K0-26
292 1 L0-16 G16-18
294 1 R0-1 Y1-17 R19-20 Y20-26
292 3 Y20-21 O23-24 Y24-26
295 1 Y3-13 G16-17
296 2 R17-18
296 1 Y19-21 G20-21 O23-25
297 1 N0-7 S23-26
298 1 K0-26
290 10 K18-19
299 24 K22-23
302 19 G23-26
300 1 O25-26
303 1 D23-26
305 1 D24-25
308 1 D25-26
313 1 D23-26
316 1 D25-26
321 1 K23-26
356 1 P0-26
357 8 A0-10 K5-6
357 13 A10-17
363 1 O1-2 O7-8
361 4 O11-15
366 1 O11-16
368 1 O13-14
374 12 A0-7
374 6 O2-3
374 2 O5-6
377 8 O5-6
374 17 A10-19
375 2 O11-12
374 6 O15-16
381 5 O15-16
388 3 O15-16
374 1 O17-18
381 1 O17-19
390 1 O17-18
391 11 A10-14
392 9 O12-13
391 18 A0-6
392 3 O1-2
396 3 O1-2
392 6 O3-4
392 1 O4-5
393 2 O5-6
396 1 O5-6
401 2 O1-6
404 1 O2-3 O4-5
406 1 O1-6
406 3 O3-4
410 18 A0-10
409 1 D0-10
409 18 K5-6
409 13 A10-17
410 5 O12-13
409 3 O15-16
413 8 O15-16
427 18 A10-19
429 12 O12-17
427 1 O18-19
443 2 O12-18
445 11 A10-17
446 5 O11-15
452 1 O11-12 O13-14 O15-16
428 17 A0-9
427 18 C3-6
428 1 O0-9
430 1 Y3-6
431 1 O0-3
433 1 O6-9
435 1 O6-9
438 1 O0-3 Y3-6 O6-9
441 1 O6-9
445 3 A0-5
462 17 A0-8
463 2 O1-7
466 2 O3-6
469 2 O2-7
462 16 A10-19
470 1 O11-18
473 2 O11-17
476 1 O13-14
480 18 T0-1 W1-2 T2-3 W3-4 T4-5 W5-6 T6-7 W7-8 T8-9 W9-10
490 1 R9-10
480 12 A10-17
481 2 O12-13
481 1 O13-15
485 1 O11-12
486 2 O13-15
490 2 O12-13
490 1 O14-15
498 9 A0-7
500 4 O2-3 O5-6
498 18 A10-19
499 4 O15-16
498 1 O17-18
504 1 O11-12 O15-16
508 2 O13-14
511 2 O13-14
514 1 O13-14
508 8 O17-18
516 18 T10-11 W11-12 T12-13 W13-14 T14-15 W15-16 T16-17 W17-18 T18-19 W19-20
516 7 H15-16
526 8 H14-15
520 3 R16-17
525 2 R16-17
530 2 R15-16`;
const edge=c=>Math.round(Math.min(c,26)*374/26);
let out='<path fill="#d4d4d4" d="M0 0h374v535H0z"/>';
for(const line of bands.split('\n')){
  const twice=line[0]==='*';
  const [y,h,...segs]=line.replace('*','').split(' ');
  for(const off of twice?[0,15]:[0])for(const s of segs){
    const [a,b]=s.slice(1).split('-').map(n=>edge(+n+off));
    out+=`<rect x="${a}" y="${y}" width="${b-a}" height="${h}" fill="${tint[s[0]]}"/>`;
  }
}
out+='<path d="M.5 289.500h58v23H.5z" fill="none" stroke="#0f0"/>';
document.getElementById('map').innerHTML=out;
</script>
<script src="https://cdn.jsdelivr.net/npm/bootstrap@5.3.0/dist/js/bootstrap.bundle.min.js"></script>
</body>
</html>
